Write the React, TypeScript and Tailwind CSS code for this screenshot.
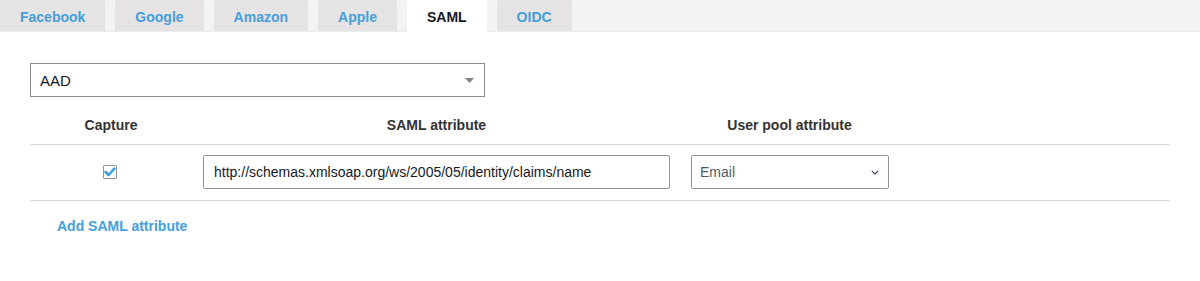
import React from "react";

const tabs = ["Facebook", "Google", "Amazon", "Apple", "SAML", "OIDC"];

export default function App() {
  return (
    <div
      className="w-[1200px] h-[281px] bg-white text-[14px] text-[#16191f] overflow-hidden"
      style={{ fontFamily: '"Liberation Sans", Arial, sans-serif' }}
    >
      <div className="h-8 bg-[#f2f3f3] border-b border-[#eaeded] flex gap-[10px]">
        {tabs.map((t) => (
          <div
            key={t}
            className={
              t === "SAML"
                ? "h-8 px-5 flex items-center rounded-t-[3px] bg-white font-bold text-[#16191f] pt-[3px]"
                : "h-[31px] px-5 flex items-center rounded-t-[3px] bg-[#e5e3e4] font-bold text-[#44a0dd] pt-[3px]"
            }
          >
            {t}
          </div>
        ))}
      </div>

      <div className="px-[30px]">
        <div className="mt-[31px] w-[455px] h-[34px] border border-[#8a8a8a] flex items-center justify-between pl-[9px] pr-[10px]">
          <span className="text-[15px] leading-[17px] text-[#16191f]">AAD</span>
          <svg width="9" height="5" viewBox="0 0 9 5">
            <polygon points="0,0 9,0 4.5,5" fill="#7d8586" />
          </svg>
        </div>

        <div className="mt-[10px] grid grid-cols-[162px_489px_217px_1fr] border-b border-[#d5dbdb]">
          <div className="py-[10px] leading-[17px] font-bold text-[#333] text-center">Capture</div>
          <div className="py-[10px] leading-[17px] font-bold text-[#333] text-center">SAML attribute</div>
          <div className="py-[10px] leading-[17px] font-bold text-[#333] text-center">User pool attribute</div>
          <div />
        </div>

        <div className="grid grid-cols-[162px_489px_217px_1fr] border-b border-[#d5dbdb] pt-[10px] pb-[11px]">
          <div className="flex items-center justify-center">
            <div className="w-[14px] h-[14px] border border-[#8d9596] rounded-[1px] bg-white flex items-center justify-center mr-[2px]">
              <svg width="12" height="10" viewBox="0 0 12 10">
                <polyline
                  points="1.6,5 4.6,8 10.4,1.6"
                  fill="none"
                  stroke="#3f9fdc"
                  strokeWidth="2.6"
                  strokeLinecap="round"
                  strokeLinejoin="round"
                />
              </svg>
            </div>
          </div>
          <div className="px-[11px]">
            <div className="h-[34px] border border-[#8d9596] rounded-[2px] flex items-center pl-[10px] text-[14px] text-[#16191f]">
              http://schemas.xmlsoap.org/ws/2005/05/identity/claims/name
            </div>
          </div>
          <div className="pl-[10px] pr-[9px]">
            <div className="h-[34px] border border-[#8d9596] rounded-[2px] flex items-center justify-between pl-[8px] pr-[9px] text-[14px] text-[#545b64]">
              <span>Email</span>
              <svg width="8" height="5" viewBox="0 0 8 5">
                <polyline
                  points="0.8,0.8 4,4 7.2,0.8"
                  fill="none"
                  stroke="#3c4c5e"
                  strokeWidth="1.2"
                />
              </svg>
            </div>
          </div>
          <div />
        </div>

        <div className="mt-[17px] pl-[27px] font-bold text-[#44a0dd] leading-[17px]">
          Add SAML attribute
        </div>
      </div>
    </div>
  );
}
